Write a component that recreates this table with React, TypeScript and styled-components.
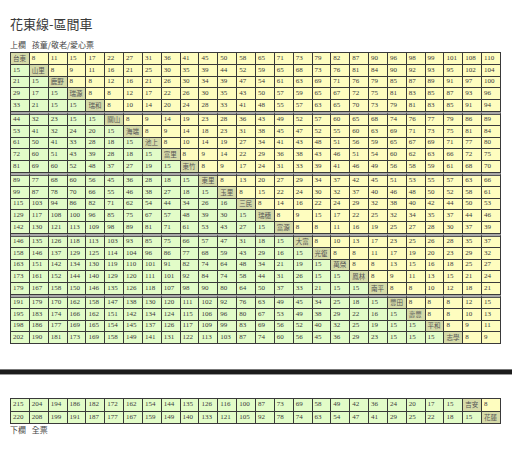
import styled, { createGlobalStyle } from 'styled-components';

const stations = [
  '台東', '山里', '鹿野', '瑞源', '瑞和', '關山', '海端', '池上', '富里', '東竹', '東里', '玉里', '三民',
  '瑞穗', '富源', '大富', '光復', '萬榮', '鳳林', '南平', '豐田', '壽豐', '平和', '志學', '吉安', '花蓮',
];

// each row: fares before the station cell, then fares after it
const fares: number[][] = [
  [8, 11, 15, 17, 22, 27, 31, 36, 41, 45, 50, 58, 65, 71, 73, 79, 82, 87, 90, 96, 98, 99, 101, 108, 110],
  [15, 8, 9, 11, 16, 21, 25, 30, 35, 39, 44, 52, 59, 65, 68, 73, 76, 81, 84, 90, 92, 93, 95, 102, 104],
  [21, 15, 8, 8, 12, 16, 21, 26, 30, 34, 39, 47, 54, 61, 63, 69, 71, 76, 79, 85, 87, 89, 91, 97, 100],
  [29, 17, 15, 8, 8, 12, 17, 22, 26, 30, 35, 43, 50, 57, 59, 65, 67, 72, 75, 81, 83, 85, 87, 93, 96],
  [33, 21, 15, 15, 8, 10, 14, 20, 24, 28, 33, 41, 48, 55, 57, 63, 65, 70, 73, 79, 81, 83, 85, 91, 94],
  [44, 32, 23, 15, 15, 8, 9, 14, 19, 23, 28, 36, 43, 49, 52, 57, 60, 65, 68, 74, 76, 77, 79, 86, 89],
  [53, 41, 32, 24, 20, 15, 8, 9, 14, 18, 23, 31, 38, 45, 47, 52, 55, 60, 63, 69, 71, 73, 75, 81, 84],
  [61, 50, 41, 33, 28, 18, 15, 8, 10, 14, 19, 27, 34, 41, 43, 48, 51, 56, 59, 65, 67, 69, 71, 77, 80],
  [72, 60, 51, 43, 39, 28, 18, 15, 8, 9, 14, 22, 29, 36, 38, 43, 46, 51, 54, 60, 62, 63, 66, 72, 75],
  [81, 69, 60, 52, 48, 37, 27, 19, 15, 8, 9, 17, 24, 31, 33, 39, 41, 46, 49, 56, 58, 59, 61, 68, 70],
  [89, 77, 68, 60, 56, 45, 36, 28, 18, 15, 8, 13, 20, 27, 29, 34, 37, 42, 45, 51, 53, 55, 57, 63, 66],
  [99, 87, 78, 70, 66, 55, 46, 38, 27, 18, 15, 8, 15, 22, 24, 30, 32, 37, 40, 46, 48, 50, 52, 58, 61],
  [115, 103, 94, 86, 82, 71, 62, 54, 44, 34, 26, 16, 8, 14, 16, 22, 24, 29, 32, 38, 40, 42, 44, 50, 53],
  [129, 117, 108, 100, 96, 85, 75, 67, 57, 48, 39, 30, 15, 8, 9, 15, 17, 22, 25, 32, 34, 35, 37, 44, 46],
  [142, 130, 121, 113, 109, 98, 89, 81, 71, 61, 53, 43, 27, 15, 8, 8, 11, 16, 19, 25, 27, 28, 30, 37, 39],
  [146, 135, 126, 118, 113, 103, 93, 85, 75, 66, 57, 47, 31, 18, 15, 8, 10, 13, 17, 23, 25, 26, 28, 35, 37],
  [158, 146, 137, 129, 125, 114, 104, 96, 86, 77, 68, 59, 43, 29, 16, 15, 8, 8, 11, 17, 19, 20, 23, 29, 32],
  [163, 151, 142, 134, 130, 119, 110, 101, 91, 82, 74, 64, 48, 34, 21, 19, 15, 8, 8, 13, 15, 16, 18, 25, 27],
  [173, 161, 152, 144, 140, 129, 120, 111, 101, 92, 84, 74, 58, 44, 31, 26, 15, 15, 8, 9, 11, 13, 15, 21, 24],
  [179, 167, 158, 150, 146, 135, 126, 118, 107, 98, 90, 80, 64, 50, 37, 33, 21, 15, 15, 8, 8, 10, 12, 18, 21],
  [191, 179, 170, 162, 158, 147, 138, 130, 120, 111, 102, 92, 76, 63, 49, 45, 34, 25, 18, 15, 8, 8, 8, 12, 15],
  [195, 183, 174, 166, 162, 151, 142, 134, 124, 115, 106, 96, 80, 67, 53, 49, 38, 29, 22, 16, 15, 8, 8, 10, 13],
  [198, 186, 177, 169, 165, 154, 145, 137, 126, 117, 109, 99, 83, 69, 56, 52, 40, 32, 25, 19, 15, 15, 8, 9, 11],
  [202, 190, 181, 173, 169, 158, 149, 141, 131, 122, 113, 103, 87, 74, 60, 56, 45, 36, 29, 23, 15, 15, 15, 8, 9],
  [215, 204, 194, 186, 182, 172, 162, 154, 144, 135, 126, 116, 100, 87, 73, 69, 58, 49, 42, 36, 24, 20, 17, 15, 8],
  [220, 208, 199, 191, 187, 177, 167, 159, 149, 140, 133, 121, 105, 92, 78, 74, 63, 54, 47, 41, 29, 25, 22, 18, 15],
];

type Kind = 'lower' | 'station' | 'upper';

const GlobalStyle = createGlobalStyle`
  body {
    margin: 0;
    background: #fff;
    font-family: "Liberation Serif", "Noto Sans CJK TC", serif;
    color: #333;
  }
`;

const Page = styled.div`
  padding: 14px 10px 0;
`;

const Title = styled.h1`
  margin: 0;
  font-family: "Noto Sans CJK TC", sans-serif;
  font-size: 13px;
  font-weight: 400;
  line-height: 20px;
  color: #3a3a3a;
`;

const Note = styled.p`
  margin: 6px 0 2px;
  font-family: "Noto Sans CJK TC", sans-serif;
  font-size: 8px;
  line-height: 10px;
  color: #444;
  word-spacing: 4px;
`;

const FareTable = styled.table`
  width: 491px;
  table-layout: fixed;
  border-collapse: separate;
  border-spacing: 0;
  border-top: 1px solid #3a3a3a;
  border-left: 1px solid #3a3a3a;
`;

const bg: Record<Kind, string> = {
  lower: '#e2fcc8',
  station: '#d6dba8',
  upper: '#fefdbf',
};

const Cell = styled.td<{ $kind: Kind; $groupStart?: boolean; $tall?: boolean }>`
  box-sizing: border-box;
  height: ${(p) => (p.$tall ? 12.5 : 11.8) + (p.$groupStart ? 2 : 0)}px;
  padding: 0 0 0 2px;
  overflow: hidden;
  white-space: nowrap;
  font-family: ${(p) =>
    p.$kind === 'station' ? '"Noto Sans CJK TC", sans-serif' : '"Liberation Serif", serif'};
  font-size: ${(p) => (p.$kind === 'station' ? 6.5 : 7)}px;
  line-height: 9px;
  color: ${(p) => (p.$kind === 'station' ? '#555' : '#3a3a3a')};
  background: ${(p) => bg[p.$kind]};
  border-right: 1px solid #3a3a3a;
  border-bottom: 1px solid #3a3a3a;
  border-top: ${(p) => (p.$groupStart ? '2px solid #a8a8a8' : '0')};
  box-shadow: ${(p) => (p.$groupStart ? 'inset 0 1px 0 #555' : 'none')};
`;

const Bar = styled.div`
  margin: 25px -10px 23px;
  height: 6px;
  background: #1c1c1c;
  border-top: 1px solid #777;
  border-bottom: 1px solid #999;
  box-sizing: border-box;
`;

const Footer = styled.p`
  margin: 1px 0 0;
  font-family: "Noto Sans CJK TC", sans-serif;
  font-size: 8px;
  line-height: 10px;
  color: #444;
  word-spacing: 4px;
`;

const FareRow = ({ index, groupStart, tall }: { index: number; groupStart?: boolean; tall?: boolean }) => {
  const row = fares[index];
  return (
    <tr>
      {stations.map((_, col) => {
        const kind: Kind = col < index ? 'lower' : col === index ? 'station' : 'upper';
        const text = kind === 'station' ? stations[index] : row[col < index ? col : col - 1];
        return (
          <Cell key={col} $kind={kind} $groupStart={groupStart} $tall={tall}>
            {text}
          </Cell>
        );
      })}
    </tr>
  );
};

export default function App() {
  const upperRows = Array.from({ length: 24 }, (_, i) => i);
  return (
    <Page>
      <GlobalStyle />
      <Title>花東線-區間車</Title>
      <Note>上欄 孩童/敬老/愛心票</Note>
      <FareTable>
        <tbody>
          {upperRows.map((i) => (
            <FareRow key={i} index={i} groupStart={i > 0 && i % 5 === 0} />
          ))}
        </tbody>
      </FareTable>
      <Bar />
      <FareTable>
        <tbody>
          <FareRow index={24} tall />
          <FareRow index={25} tall />
        </tbody>
      </FareTable>
      <Footer>下欄 全票</Footer>
    </Page>
  );
}
